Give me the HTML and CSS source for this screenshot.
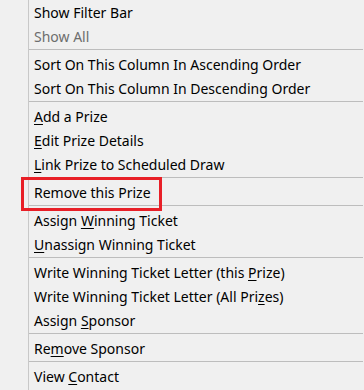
FILE: index.html
```html
<!DOCTYPE html>
<html>
<head>
<meta charset="utf-8">
<link rel="stylesheet" href="styles.css">
</head>
<body>
<div class="menu">
  <div class="item">Show Filter Bar</div>
  <div class="item disabled">Show All</div>
  <div class="sep"></div>
  <div class="item">Sort On This Column In Ascending Order</div>
  <div class="item">Sort On This Column In Descending Order</div>
  <div class="sep"></div>
  <div class="item"><u>A</u>dd a Prize</div>
  <div class="item"><u>E</u>dit Prize Details</div>
  <div class="item"><u>L</u>ink Prize to Scheduled Draw</div>
  <div class="sep"></div>
  <div class="item">Remove this Prize</div>
  <div class="sep"></div>
  <div class="item">Assign <u>W</u>inning Ticket</div>
  <div class="item"><u>U</u>nassign Winning Ticket</div>
  <div class="sep"></div>
  <div class="item">Write Winning Ticket Letter (this <u>P</u>rize)</div>
  <div class="item">Write Winning Ticket Letter (All Pri<u>z</u>es)</div>
  <div class="item">Assign <u>S</u>ponsor</div>
  <div class="sep"></div>
  <div class="item">Re<u>m</u>ove Sponsor</div>
  <div class="sep"></div>
  <div class="item">View <u>C</u>ontact</div>
  <div class="highlight"></div>
</div>
</body>
</html>
```
FILE: styles.css
```css
html, body {
  margin: 0;
  padding: 0;
  background: #f0f0f0;
}
body {
  width: 364px;
  height: 390px;
  overflow: hidden;
  font-family: "Noto Sans", "Open Sans", sans-serif;
  font-size: 14px;
  color: #000;
}
.menu {
  position: relative;
  padding-top: 1px;
  margin-left: 28px;
  border-left: 1px solid #c8c8c8;
  height: 389px;
}
.item {
  height: 24px;
  line-height: 23px;
  padding-left: 5px;
  white-space: nowrap;
}
.item u {
  text-decoration: underline;
  text-underline-offset: 2px;
  text-decoration-thickness: 1px;
}
.disabled {
  color: #6d6d6d;
}
.sep {
  height: 3px;
  border-top: 1px solid #bdbdbd;
  margin-right: 1px;
}
.highlight {
  position: absolute;
  left: -8px;
  top: 177px;
  width: 135px;
  height: 28px;
  border: 3px solid #e81f27;
}
```
